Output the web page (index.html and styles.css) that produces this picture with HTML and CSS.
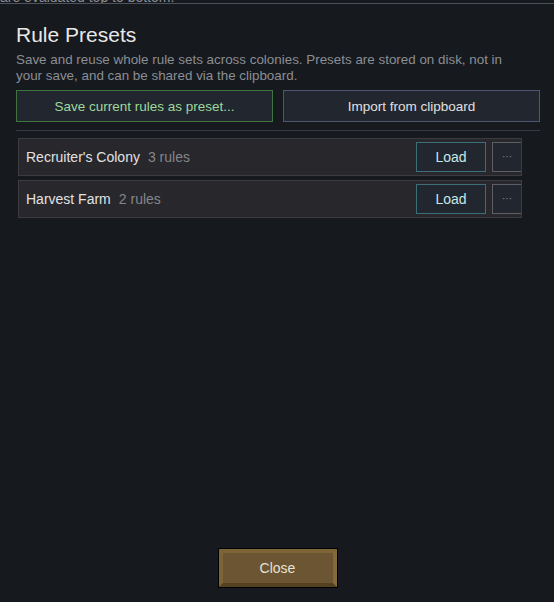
FILE: index.html
```html
<!DOCTYPE html>
<html>
<head>
<meta charset="utf-8">
<link rel="stylesheet" href="styles.css">
</head>
<body>
<div class="topbar"><div class="topbar-text">are evaluated top to bottom.</div></div>
<div class="panel">
  <h1 class="title">Rule Presets</h1>
  <p class="desc">Save and reuse whole rule sets across colonies. Presets are stored on disk, not in your save, and can be shared via the clipboard.</p>
  <div class="actions">
    <button class="btn btn-save">Save current rules as preset...</button>
    <button class="btn btn-import">Import from clipboard</button>
  </div>
  <div class="sep"></div>
  <div class="list">
    <div class="row">
      <span class="name">Recruiter's Colony</span><span class="count">3 rules</span>
      <span class="spacer"></span>
      <button class="btn btn-load">Load</button>
      <button class="btn btn-more">···</button>
    </div>
    <div class="row">
      <span class="name">Harvest Farm</span><span class="count">2 rules</span>
      <span class="spacer"></span>
      <button class="btn btn-load">Load</button>
      <button class="btn btn-more">···</button>
    </div>
  </div>
</div>
<div class="footer">
  <button class="btn-close">Close</button>
</div>
</body>
</html>
```
FILE: styles.css
```css
* { box-sizing: border-box; }
html, body { margin: 0; padding: 0; }
body {
  width: 554px;
  height: 602px;
  background: #16191e;
  font-family: "Liberation Sans", Arial, sans-serif;
  color: #e4e4e4;
  display: flex;
  flex-direction: column;
  overflow: hidden;
}
.topbar {
  height: 4px;
  border-bottom: 1px solid #4e535b;
  overflow: hidden;
}
.topbar-text {
  font-size: 14px;
  line-height: 16px;
  margin-top: -11px;
  color: #8b8e94;
  white-space: nowrap;
}
.panel {
  padding: 19px 14px 0 16px;
  flex: 1;
}
.title {
  margin: 0;
  font-size: 21px;
  font-weight: 400;
  line-height: 24px;
  color: #e8e8e8;
}
.desc {
  margin: 5px 0 0;
  padding-right: 16px;
  font-size: 13.4px;
  line-height: 16px;
  color: #8b8e94;
}
.actions {
  display: flex;
  gap: 10px;
  margin-top: 6px;
}
.btn {
  font-family: inherit;
  background: #22262e;
  color: #e0e0e0;
  border: 1px solid #4c5568;
  padding: 0;
  cursor: pointer;
}
.actions .btn {
  flex: 1;
  height: 32px;
  font-size: 13.5px;
}
.btn-save {
  border-color: #3d7440;
  color: #9ed89c;
}
.btn-import {
  border-color: #4c5670;
}
.sep {
  height: 1px;
  background: #373a41;
  margin-top: 8px;
}
.list {
  margin-top: 7px;
  padding-left: 2px;
  display: flex;
  flex-direction: column;
  gap: 4px;
}
.row {
  width: 504px;
  height: 38px;
  background: #27272c;
  border: 1px solid #3b3b41;
  display: flex;
  align-items: center;
  padding: 0 0 0 7px;
  overflow: hidden;
  font-size: 14px;
}
.name { color: #e2e2e2; }
.count { color: #85868a; margin-left: 8px; }
.spacer { flex: 1; }
.btn-load {
  width: 70px;
  height: 30px;
  font-size: 14px;
  border-color: #3d6f78;
  color: #c7e6e8;
}
.btn-more {
  width: 30px;
  height: 30px;
  margin-left: 6px;
  margin-right: -1px;
  border-color: #5e5f66;
  color: #8a8b90;
  font-size: 10px;
  line-height: 1;
}
.footer {
  display: flex;
  justify-content: center;
  padding-bottom: 15px;
  padding-left: 1px;
}
.btn-close {
  width: 118px;
  height: 38px;
  font-family: inherit;
  font-size: 14px;
  color: #e8e2d6;
  background: #6b5532;
  border: 4px solid;
  border-color: #7e6538 #85693a #54411f #7d6337;
  box-shadow: 0 0 0 1px #000;
  padding: 0;
}
```
